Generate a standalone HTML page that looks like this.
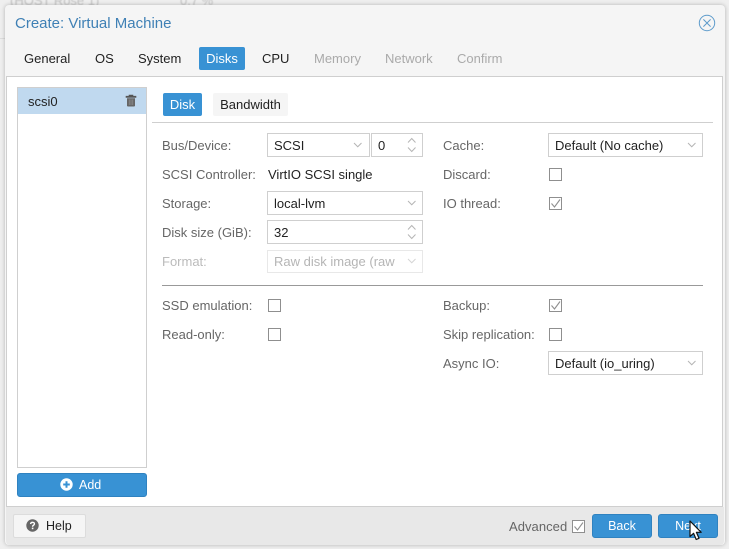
<!DOCTYPE html>
<html><head><meta charset="utf-8">
<style>
html,body{margin:0;padding:0}
body{width:729px;height:549px;overflow:hidden;position:relative;background:#efefef;font-family:"Liberation Sans",sans-serif;font-size:13px;color:#1c1c1c}
.a{position:absolute;white-space:nowrap}
.l{position:absolute;white-space:nowrap;color:#666;line-height:18px}
.t{position:absolute;top:47px;height:23px;line-height:23px;white-space:nowrap;color:#222}
.d{color:#aaa}
.f{position:absolute;box-sizing:border-box;height:24px;border:1px solid #cfcfcf;background:#fff;line-height:24px;padding-left:6px;color:#222}
.c{position:absolute;box-sizing:border-box;width:13px;height:13px;border:1px solid #8f8f8f;background:#fff}
svg{position:absolute;display:block}
.btn{position:absolute;box-sizing:border-box;background:#3892d4;border:1px solid #2f82c0;border-radius:3px;color:#fff;text-align:center;font-weight:400}
</style></head><body>
<div class="a" style="left:10px;top:-7px;color:#c4c4c4;font-size:13px;filter:blur(.5px)">(HOST Rose 1)</div>
<div class="a" style="left:180px;top:-7px;color:#c4c4c4;font-size:13px;filter:blur(.5px)">0.7 %</div>
<div class="a" style="left:0;top:38px;width:5px;height:1px;background:#ddd"></div>
<div class="a" style="left:5px;top:5px;width:720px;height:540px;background:#f5f5f5;border-radius:4px;box-shadow:0 0 4px rgba(0,0,0,.25)"></div>
<div class="a" style="left:15px;top:15px;font-size:15px;line-height:18px;color:#3f80b5">Create: Virtual Machine</div>
<svg style="left:698px;top:14px" width="18" height="18" viewBox="0 0 18 18"><circle cx="9" cy="9" r="7.7" fill="none" stroke="#5d9bcb" stroke-width="1"/><path d="M5.4 5.4L12.6 12.6M12.6 5.4L5.4 12.6" stroke="#5d9bcb" stroke-width="1"/></svg>

<div class="t" style="left:24px">General</div>
<div class="t" style="left:95px">OS</div>
<div class="t" style="left:138px">System</div>
<div class="a" style="left:199px;top:47px;width:46px;height:23px;line-height:23px;background:#3892d4;border-radius:2px;color:#fff;text-align:center">Disks</div>
<div class="t" style="left:262px">CPU</div>
<div class="t d" style="left:314px">Memory</div>
<div class="t d" style="left:385px">Network</div>
<div class="t d" style="left:457px">Confirm</div>

<div class="a" style="left:6px;top:76px;width:717px;height:431px;box-sizing:border-box;background:#fff;border:1px solid #cfcfcf"></div>
<div class="a" style="left:17px;top:87px;width:130px;height:381px;box-sizing:border-box;border:1px solid #cfcfcf;background:#fff"></div>
<div class="a" style="left:18px;top:88px;width:128px;height:26px;background:#c0d9ef"></div>
<div class="a" style="left:28px;top:93px;line-height:18px;color:#222">scsi0</div>
<svg style="left:125px;top:94px" width="12" height="13" viewBox="0 0 12 13"><path d="M1 2.2H11V3.4H1Z M4 2.2V1H8V2.2" fill="#555" stroke="#555" stroke-width=".6"/><path d="M2 4.2H10V11.6Q10 12.5 9 12.5H3Q2 12.5 2 11.6Z" fill="#666"/><path d="M4.2 5.5V11M6 5.5V11M7.8 5.5V11" stroke="#9a9a9a" stroke-width=".6"/></svg>
<div class="btn" style="left:17px;top:473px;width:130px;height:24px"></div>
<svg style="left:60px;top:478px" width="13" height="13" viewBox="0 0 13 13"><circle cx="6.5" cy="6.5" r="6.2" fill="#fff"/><path d="M3.2 6.5H9.8M6.5 3.2V9.8" stroke="#3892d4" stroke-width="2"/></svg>
<div class="a" style="left:79px;top:477px;line-height:16px;color:#fff;font-size:12.5px">Add</div>

<div class="a" style="left:163px;top:93px;width:39px;height:23px;line-height:23px;background:#3892d4;border-radius:2px;color:#fff;text-align:center">Disk</div>
<div class="a" style="left:213px;top:93px;width:75px;height:23px;line-height:23px;background:#f5f5f5;border-radius:2px;color:#222;text-align:center">Bandwidth</div>
<div class="a" style="left:152px;top:122px;width:561px;height:1px;background:#cfcfcf"></div>

<div class="l" style="left:162px;top:137px">Bus/Device:</div>
<div class="f" style="left:267px;top:133px;width:103px">SCSI</div>
<svg style="left:351px;top:141px" width="12" height="8" viewBox="0 0 12 8"><path d="M3 2L6.75 5.75L10.5 2" fill="none" stroke="#b5b5b5" stroke-width="1"/></svg>
<div class="f" style="left:371px;top:133px;width:52px">0</div>
<svg style="left:405px;top:136px" width="12" height="18" viewBox="0 0 12 18"><path d="M3 6.5L6.75 2.5L10.5 6.5M3 11.5L6.75 15.5L10.5 11.5" fill="none" stroke="#b5b5b5" stroke-width="1"/></svg>
<div class="l" style="left:162px;top:166px">SCSI Controller:</div>
<div class="a" style="left:268px;top:166px;line-height:18px;color:#222">VirtIO SCSI single</div>
<div class="l" style="left:162px;top:195px">Storage:</div>
<div class="f" style="left:267px;top:191px;width:156px">local-lvm</div>
<svg style="left:405px;top:199px" width="12" height="8" viewBox="0 0 12 8"><path d="M3 2L6.75 5.75L10.5 2" fill="none" stroke="#b5b5b5" stroke-width="1"/></svg>
<div class="l" style="left:162px;top:224px">Disk size (GiB):</div>
<div class="f" style="left:267px;top:220px;width:156px">32</div>
<svg style="left:405px;top:223px" width="12" height="18" viewBox="0 0 12 18"><path d="M3 6.5L6.75 2.5L10.5 6.5M3 11.5L6.75 15.5L10.5 11.5" fill="none" stroke="#b5b5b5" stroke-width="1"/></svg>
<div class="l" style="left:162px;top:253px;color:#bbb">Format:</div>
<div class="f" style="left:267px;top:250px;height:23px;line-height:22px;width:156px;border-color:#e8e8e8;color:#b5b5b5">Raw disk image (raw</div>
<svg style="left:405px;top:257px" width="12" height="8" viewBox="0 0 12 8"><path d="M3 2L6.75 5.75L10.5 2" fill="none" stroke="#d5d5d5" stroke-width="1"/></svg>

<div class="l" style="left:443px;top:137px">Cache:</div>
<div class="f" style="left:548px;top:133px;width:155px">Default (No cache)</div>
<svg style="left:685px;top:141px" width="12" height="8" viewBox="0 0 12 8"><path d="M3 2L6.75 5.75L10.5 2" fill="none" stroke="#b5b5b5" stroke-width="1"/></svg>
<div class="l" style="left:443px;top:166px">Discard:</div>
<div class="c" style="left:549px;top:168px"></div>
<div class="l" style="left:443px;top:195px">IO thread:</div>
<div class="c" style="left:549px;top:197px"></div>
<svg style="left:549px;top:197px" width="13" height="13" viewBox="0 0 13 13"><path d="M2.5 6.5L5.5 10L11 2.5" fill="none" stroke="#8f8f8f" stroke-width="1.1"/></svg>

<div class="a" style="left:162px;top:285px;width:541px;height:1px;background:#999"></div>

<div class="l" style="left:162px;top:297px">SSD emulation:</div>
<div class="c" style="left:268px;top:299px"></div>
<div class="l" style="left:162px;top:326px">Read-only:</div>
<div class="c" style="left:268px;top:328px"></div>
<div class="l" style="left:443px;top:297px">Backup:</div>
<div class="c" style="left:549px;top:299px"></div>
<svg style="left:549px;top:299px" width="13" height="13" viewBox="0 0 13 13"><path d="M2.5 6.5L5.5 10L11 2.5" fill="none" stroke="#8f8f8f" stroke-width="1.1"/></svg>
<div class="l" style="left:443px;top:326px">Skip replication:</div>
<div class="c" style="left:549px;top:328px"></div>
<div class="l" style="left:443px;top:355px">Async IO:</div>
<div class="f" style="left:548px;top:351px;width:155px">Default (io_uring)</div>
<svg style="left:685px;top:359px" width="12" height="8" viewBox="0 0 12 8"><path d="M3 2L6.75 5.75L10.5 2" fill="none" stroke="#b5b5b5" stroke-width="1"/></svg>

<div class="a" style="left:6px;top:507px;width:718px;height:38px;background:#e8e8e8;border-radius:0 0 4px 4px"></div>
<div class="a" style="left:13px;top:514px;width:73px;height:24px;box-sizing:border-box;background:#f5f5f5;border:1px solid #dcdcdc;border-radius:2px"></div>
<svg style="left:26px;top:519px" width="13" height="13" viewBox="0 0 13 13"><circle cx="6.5" cy="6.5" r="6.2" fill="#666"/><path d="M4.6 5.1Q4.7 3.3 6.6 3.3Q8.5 3.4 8.4 4.9Q8.4 5.8 7.3 6.4Q6.6 6.8 6.6 7.7" fill="none" stroke="#fff" stroke-width="1.4"/><rect x="5.8" y="8.6" width="1.6" height="1.6" fill="#fff"/></svg>
<div class="a" style="left:46px;top:518px;line-height:16px;font-size:12.5px;color:#222">Help</div>
<div class="l" style="left:509px;top:518px;font-size:13px;letter-spacing:.05px;color:#666">Advanced</div>
<div class="c" style="left:572px;top:520px"></div>
<svg style="left:572px;top:520px" width="13" height="13" viewBox="0 0 13 13"><path d="M2.5 6.5L5.5 10L11 2.5" fill="none" stroke="#8f8f8f" stroke-width="1.1"/></svg>
<div class="btn" style="left:592px;top:514px;width:60px;height:24px;line-height:22px;font-size:12.5px">Back</div>
<div class="btn" style="left:658px;top:514px;width:60px;height:24px;line-height:22px;font-size:12.5px">Next</div>
<svg style="left:688px;top:520px" width="16" height="22" viewBox="0 0 16 22"><path d="M2 1V16.5L5.6 13.3L8.2 19.5L11 18.3L8.4 12.3H13.2Z" fill="#fff" stroke="#111" stroke-width="1.2" stroke-linejoin="round"/></svg>
</body></html>
